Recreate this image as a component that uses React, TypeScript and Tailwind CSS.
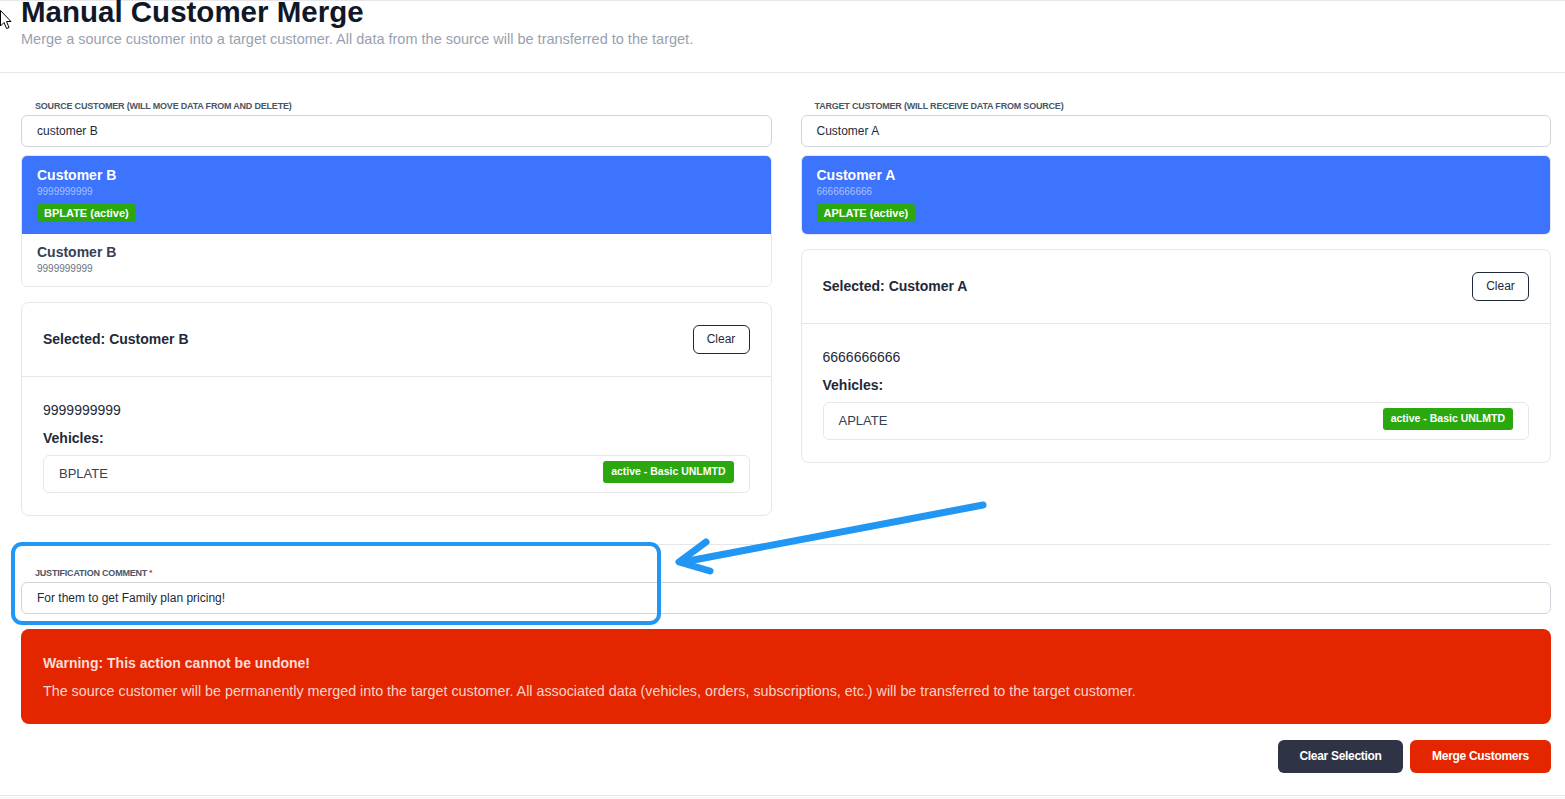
import React from 'react';

type Vehicle = { plate: string; status: string };
type Customer = { name: string; phone: string; vehicles: Vehicle[] };

const customerB: Customer = { name: 'Customer B', phone: '9999999999', vehicles: [{ plate: 'BPLATE', status: 'active - Basic UNLMTD' }] };
const customerA: Customer = { name: 'Customer A', phone: '6666666666', vehicles: [{ plate: 'APLATE', status: 'active - Basic UNLMTD' }] };

const FieldLabel: React.FC<{ children: React.ReactNode; required?: boolean }> = ({ children, required }) => (
    <div className="pl-[14px] text-[9px] leading-[12px] font-bold uppercase text-gray-600 tracking-[-0.2px]">
        {children}
        {required && <span className="text-red-600 align-top text-[8px] ml-[2px]">*</span>}
    </div>
);

const TextBox: React.FC<{ value: string }> = ({ value }) => (
    <div className="h-[32px] flex items-center px-[15px] border border-gray-300 rounded-md bg-white text-[12px] text-gray-800">
        {value}
    </div>
);

const ResultList: React.FC<{ items: { c: Customer; active: boolean }[] }> = ({ items }) => (
    <div className="border border-gray-200 rounded-md overflow-hidden">
        {items.map((item, i) =>
            item.active ? (
                <div key={i} className="bg-[#3d74fd] px-[15px] pt-[10px] pb-[10px]">
                    <div className="text-[14px] leading-[18px] font-bold text-white">{item.c.name}</div>
                    <div className="text-[10px] leading-[15px] text-[#a8c0fb]">{item.c.phone}</div>
                    <div className="mt-[5px] inline-flex items-center h-[18px] px-[7px] rounded-[3px] bg-[#2aa80e] text-white text-[11px] font-bold">
                        {item.c.vehicles[0].plate} (active)
                    </div>
                </div>
            ) : (
                <div key={i} className="bg-white px-[15px] pt-[9px] pb-[10px]">
                    <div className="text-[14px] leading-[18px] font-bold text-gray-700">{item.c.name}</div>
                    <div className="text-[10px] leading-[15px] text-gray-500">{item.c.phone}</div>
                </div>
            )
        )}
    </div>
);

const SelectedCard: React.FC<{ c: Customer }> = ({ c }) => (
    <div className="border border-gray-200 rounded-lg bg-white">
        {/* Header */}
        <div className="h-[74px] flex items-center justify-between pl-[21px] pr-[21px] border-b border-gray-200">
            <span className="text-[14px] font-bold text-gray-800">Selected: {c.name}</span>
            <button className="h-[29px] w-[57px] border border-gray-800 rounded-md bg-white text-[12px] text-gray-800">Clear</button>
        </div>
        {/* Body */}
        <div className="px-[21px] pt-[24px] pb-[22px]">
            <div className="text-[14px] leading-[18px] text-gray-800">{c.phone}</div>
            <div className="mt-[10px] text-[14px] leading-[18px] font-bold text-gray-800">Vehicles:</div>
            <div className="mt-[8px] flex flex-col gap-2">
                {c.vehicles.map((v) => (
                    <div key={v.plate} className="h-[38px] flex items-center justify-between pl-[15px] pr-[15px] border border-gray-200 rounded-md">
                        <span className="text-[13px] text-gray-700">{v.plate}</span>
                        <span className="-mt-[4px] h-[22px] inline-flex items-start pt-[3px] px-[8px] rounded-[3px] bg-[#2aa80e] text-white text-[10.5px] font-bold">
                            {v.status}
                        </span>
                    </div>
                ))}
            </div>
        </div>
    </div>
);

const App: React.FC = () => {
    return (
        <div className="relative w-[1565px] h-[799px] overflow-hidden bg-gray-50" style={{ fontFamily: '"Liberation Sans", Arial, sans-serif' }}>
            <div className="bg-white border-t border-b border-gray-200 h-[796px]">
                {/* Page header */}
                <div className="h-[75px] border-b border-gray-200 pl-[21px]">
                    <h1 className="-mt-[3px] text-[29.5px] leading-[28px] font-extrabold text-gray-900">Manual Customer Merge</h1>
                    <p className="mt-[4px] text-[14.5px] leading-[18px] text-gray-400">
                        Merge a source customer into a target customer. All data from the source will be transferred to the target.
                    </p>
                </div>

                <div className="pl-[21px] pr-[14px] pt-[27px]">
                    <div className="grid grid-cols-2 gap-[29px] items-start">
                        <div>
                            <FieldLabel>Source Customer (will move data from and delete)</FieldLabel>
                            <div className="mt-[3px]"><TextBox value="customer B" /></div>
                            <div className="mt-[8px]">
                                <ResultList items={[{ c: customerB, active: true }, { c: customerB, active: false }]} />
                            </div>
                            <div className="mt-[15px]"><SelectedCard c={customerB} /></div>
                        </div>
                        <div>
                            <FieldLabel>Target Customer (will receive data from source)</FieldLabel>
                            <div className="mt-[3px]"><TextBox value="Customer A" /></div>
                            <div className="mt-[8px]">
                                <ResultList items={[{ c: customerA, active: true }]} />
                            </div>
                            <div className="mt-[14px]"><SelectedCard c={customerA} /></div>
                        </div>
                    </div>

                    {/* Justification */}
                    <div className="mt-[28px] border-t border-gray-200 pt-[22px]">
                        <FieldLabel required>Justification Comment</FieldLabel>
                        <div className="mt-[3px]"><TextBox value="For them to get Family plan pricing!" /></div>
                    </div>

                    {/* Warning */}
                    <div className="mt-[15px] rounded-lg bg-[#e32600] px-[22px] pt-[25px] pb-[24px]">
                        <div className="text-[14px] leading-[18px] font-bold text-[#fcdcd6]">Warning: This action cannot be undone!</div>
                        <div className="mt-[10px] text-[14.3px] leading-[18px] text-[#fbd3cc]">
                            The source customer will be permanently merged into the target customer. All associated data (vehicles, orders, subscriptions, etc.) will be transferred to the target customer.
                        </div>
                    </div>

                    {/* Actions */}
                    <div className="mt-[16px] flex justify-end gap-[7px]">
                        <button className="h-[33px] w-[125px] rounded-md bg-[#2e3446] text-white text-[12px] font-bold tracking-[-0.3px]">Clear Selection</button>
                        <button className="h-[33px] w-[141px] rounded-md bg-[#e32600] text-white text-[12px] font-bold tracking-[-0.3px]">Merge Customers</button>
                    </div>
                </div>
            </div>

            {/* Annotation overlay */}
            <svg className="absolute inset-0 pointer-events-none" width="1565" height="799" viewBox="0 0 1565 799">
                <rect x="13" y="544" width="646" height="79" rx="9" fill="none" stroke="#2196f3" strokeWidth="4" />
                <line x1="983" y1="505" x2="683" y2="562" stroke="#2196f3" strokeWidth="7" strokeLinecap="round" />
                <polyline points="706,542 679,562 710,571" fill="none" stroke="#2196f3" strokeWidth="7" strokeLinecap="round" strokeLinejoin="round" />
            </svg>

            {/* mouse cursor */}
            <svg className="absolute left-0 top-[10px] pointer-events-none" width="12" height="22" viewBox="0 0 12 22">
                <path d="M0.5 0.5 L0.5 16 L4 12.5 L6.5 18.5 L9 17.5 L6.5 11.5 L11 11.5 Z" fill="white" stroke="black" strokeWidth="1" />
            </svg>
        </div>
    );
};

export default App;
